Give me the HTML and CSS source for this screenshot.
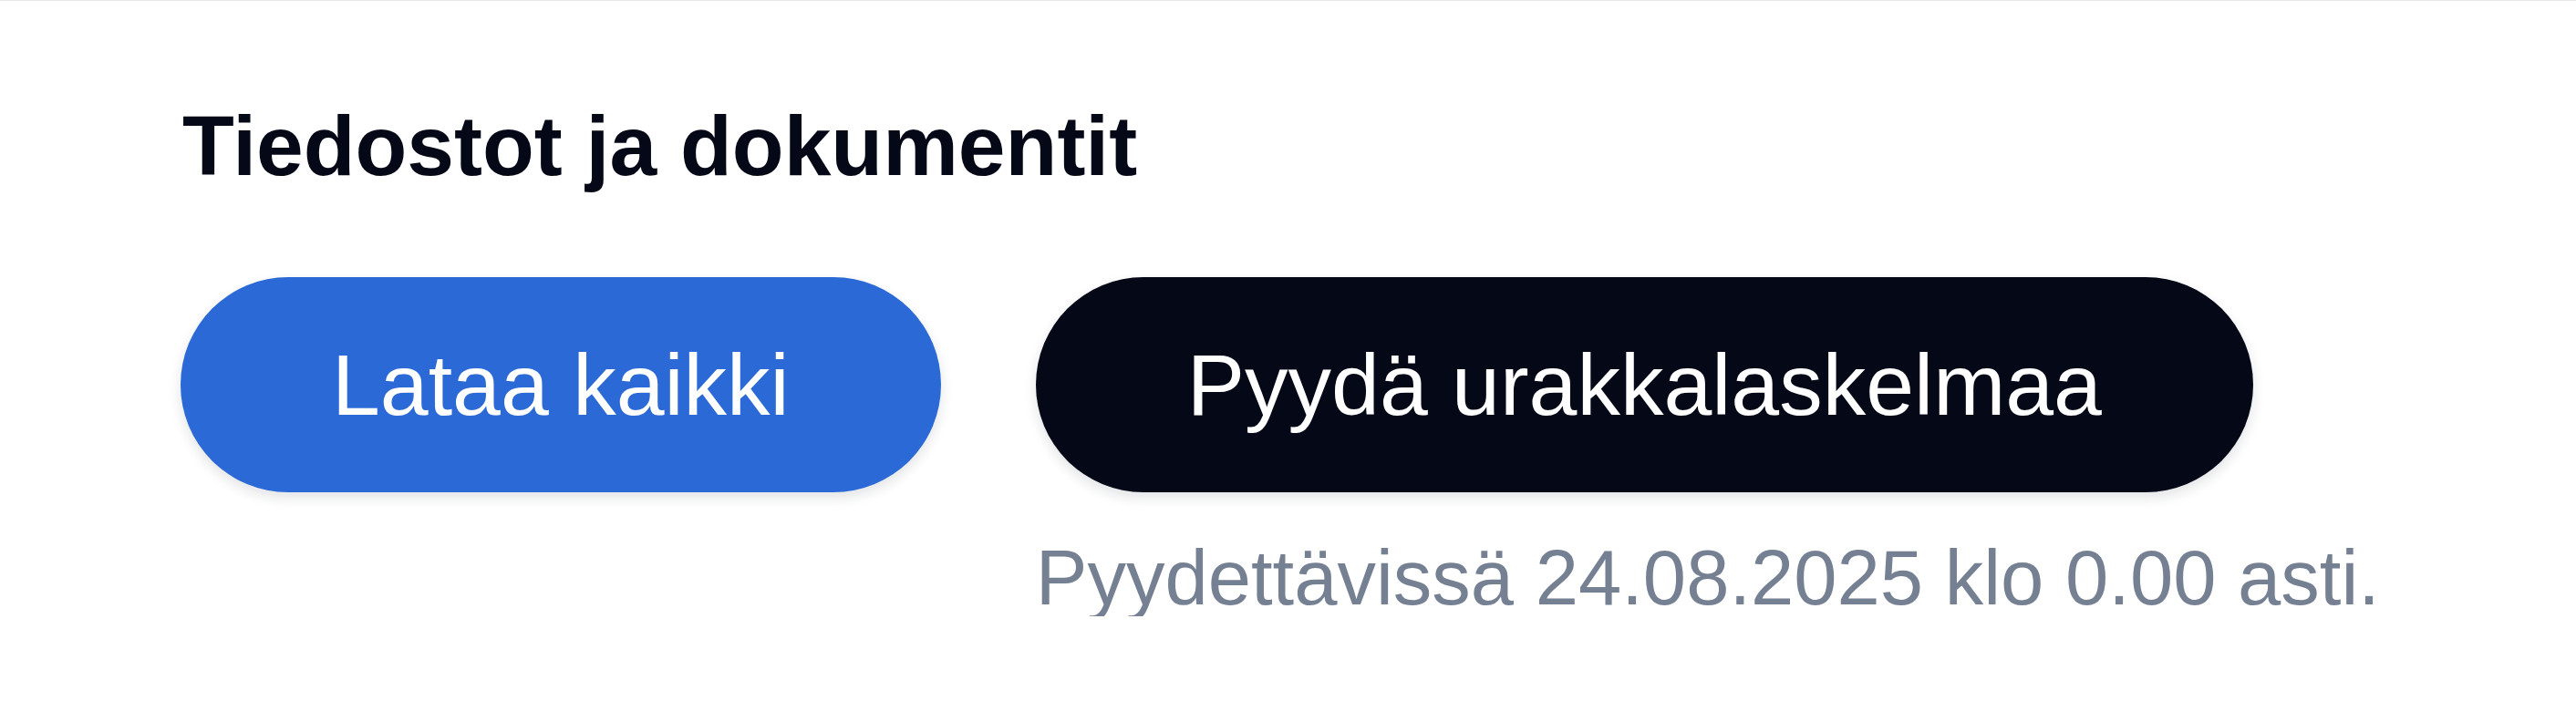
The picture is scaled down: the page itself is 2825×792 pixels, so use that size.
FILE: index.html
```html
<!DOCTYPE html>
<html lang="fi">
  <head>
    <meta charset="UTF-8" />
    <meta name="viewport" content="width=device-width, initial-scale=1.0" />
    <title>Tiedostot ja dokumentit</title>
    <link rel="stylesheet" href="styles.css">
  </head>
  <body>
    <section class="files">
      <h2>Tiedostot ja dokumentit</h2>
      <div class="actions">
        <button type="button" class="btn btn-primary">Lataa kaikki</button>
        <div class="request">
          <button type="button" class="btn btn-dark">Pyydä urakkalaskelmaa</button>
          <p class="note">Pyydettävissä 24.08.2025 klo 0.00 asti.</p>
        </div>
      </div>
    </section>
  </body>
</html>
```

FILE: styles.css
```css
body {
  margin: 0;
  font-family: "Liberation Sans", Arial, sans-serif;
  background: #fff;
  color: #050816;
  border-top: 1px solid #e6e7ea;
}

.files {
  padding: 113px 0 0 198px;
}

h2 {
  margin: 0 0 97px 2px;
  font-size: 93px;
  line-height: 1;
  font-weight: 700;
  color: #050816;
}

.actions {
  display: flex;
  align-items: flex-start;
  gap: 104px;
}

.request {
  display: flex;
  flex-direction: column;
  align-items: flex-start;
}

.btn {
  display: flex;
  align-items: center;
  height: 236px;
  padding: 0 166px;
  border: none;
  border-radius: 118px;
  font-family: inherit;
  font-size: 95px;
  line-height: 1;
  color: #fff;
  cursor: pointer;
  box-shadow: 0 6px 14px rgba(15, 23, 42, 0.12);
  white-space: nowrap;
}

.btn-primary {
  background-color: #2a69d6;
}

.btn-dark {
  background-color: #050816;
}

.note {
  margin: 51px 0 0;
  font-size: 85px;
  line-height: 1;
  color: #768093;
  white-space: nowrap;
}
```
